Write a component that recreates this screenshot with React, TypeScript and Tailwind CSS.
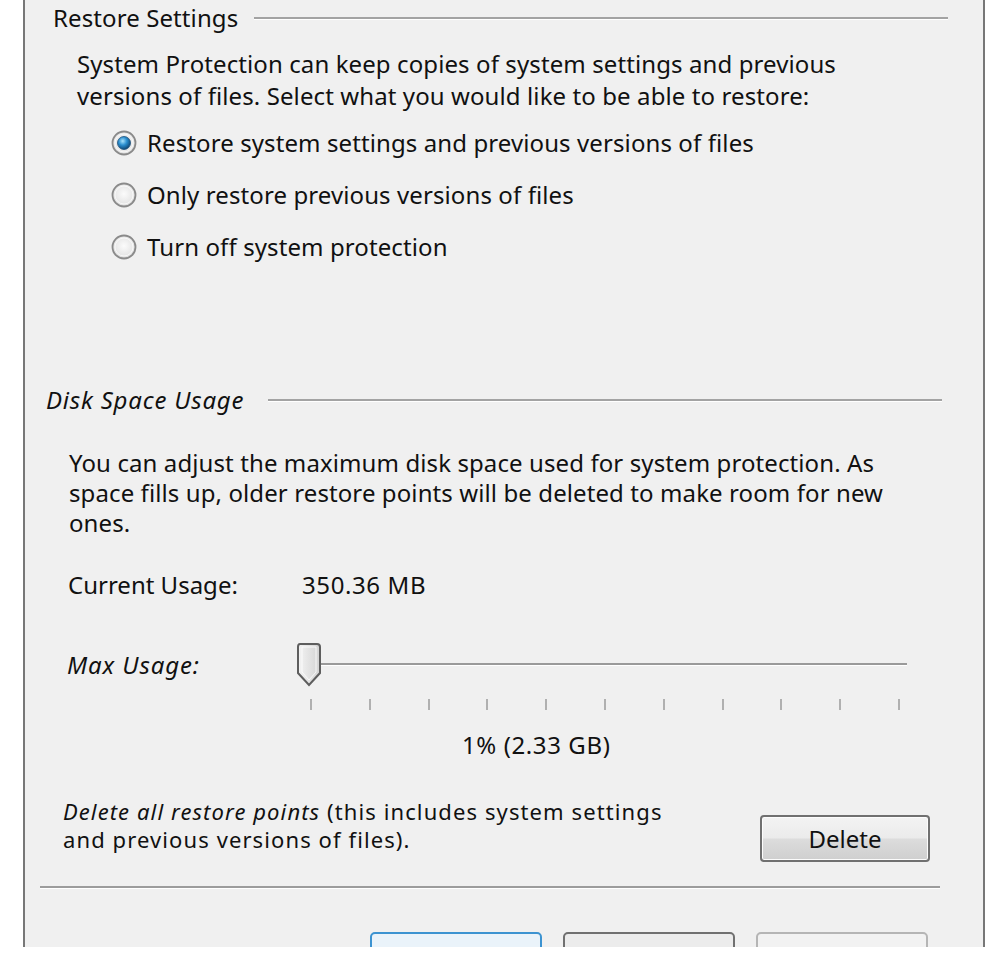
import React from "react";

const FONT = { fontFamily: '"Noto Sans", "Open Sans", Arial, sans-serif' };

function Radio({ checked, id }: { checked?: boolean; id: string }) {
  return (
    <svg width="26" height="26" viewBox="0 0 26 26" className="shrink-0">
      <defs>
        <radialGradient id={`bg-${id}`} cx="50%" cy="45%" r="60%">
          <stop offset="0%" stopColor="#fbfbfb" />
          <stop offset="70%" stopColor="#e6e6e6" />
          <stop offset="100%" stopColor="#d4d4d4" />
        </radialGradient>
        <radialGradient id={`dot-${id}`} cx="40%" cy="35%" r="70%">
          <stop offset="0%" stopColor="#a8e2fb" />
          <stop offset="45%" stopColor="#2b8fd0" />
          <stop offset="100%" stopColor="#0b3e69" />
        </radialGradient>
      </defs>
      <circle cx="13" cy="13" r="11.5" fill={`url(#bg-${id})`} stroke="#8a8a8a" strokeWidth="1.8" />
      <circle cx="13" cy="13" r="9" fill="none" stroke="#ffffff" strokeOpacity="0.7" strokeWidth="1" />
      {checked && (
        <circle cx="13" cy="13" r="6.5" fill={`url(#dot-${id})`} stroke="#1d4f78" strokeWidth="0.8" />
      )}
    </svg>
  );
}

function Thumb() {
  return (
    <svg width="28" height="46" viewBox="0 0 28 46">
      <defs>
        <linearGradient id="thumbg" x1="0" y1="0" x2="1" y2="0">
          <stop offset="0%" stopColor="#f4f4f4" />
          <stop offset="100%" stopColor="#d2d2d2" />
        </linearGradient>
      </defs>
      <path d="M5 2 H22 Q25 2 25 5 V31 L14 43 L3 31 V5 Q3 2 5 2 Z" fill="url(#thumbg)" stroke="#5e5e5e" strokeWidth="2" />
      <path d="M7 5 H21 V30 L14 38 L7 30 Z" fill="none" stroke="#ffffff" strokeOpacity="0.8" strokeWidth="1" />
    </svg>
  );
}

export default function App() {
  const ticks = Array.from({ length: 11 }, (_, i) => i);
  return (
    <div className="w-[1000px] h-[959px] bg-white overflow-hidden text-[#111111]" style={FONT}>
      <div className="ml-[23px] w-[962px] h-[947px] bg-[#f0f0f0] border-x-2 border-[#777777] overflow-hidden flex flex-col text-[24px]">
        {/* Restore Settings header */}
        <div className="flex items-center h-[36px] pl-[28px] pr-[35px] shrink-0">
          <span className="leading-none whitespace-nowrap tracking-[0.1px]">Restore Settings</span>
          <div className="flex-1 ml-[16px] h-[3px] border-t-2 border-[#a3a3a3] border-b border-b-white" />
        </div>

        <div className="mt-[12px] pl-[52px] leading-[32px] tracking-[0.1px]">
          <div className="whitespace-nowrap">System Protection can keep copies of system settings and previous</div>
          <div className="whitespace-nowrap">versions of files. Select what you would like to be able to restore:</div>
        </div>

        <div className="mt-[5px] pl-[86px] flex flex-col shrink-0">
          {[
            ["Restore system settings and previous versions of files", true],
            ["Only restore previous versions of files", false],
            ["Turn off system protection", false],
          ].map(([label, checked], i) => (
            <div key={i} className="h-[52px] flex items-center gap-[10px]">
              <Radio checked={checked as boolean} id={`r${i}`} />
              <span className="whitespace-nowrap tracking-[0.1px]">{label as string}</span>
            </div>
          ))}
        </div>

        {/* Disk Space Usage header */}
        <div className="mt-[109px] flex items-center h-[36px] pl-[21px] pr-[41px] shrink-0">
          <span className="leading-none italic whitespace-nowrap tracking-[0.8px]">Disk Space Usage</span>
          <div className="flex-1 ml-[24px] h-[3px] border-t-2 border-[#a3a3a3] border-b border-b-white" />
        </div>

        <div className="mt-[30px] pl-[44px] leading-[30px] tracking-[0.1px]">
          <div className="whitespace-nowrap">You can adjust the maximum disk space used for system protection. As</div>
          <div className="whitespace-nowrap">space fills up, older restore points will be deleted to make room for new</div>
          <div className="whitespace-nowrap">ones.</div>
        </div>

        <div className="mt-[32px] pl-[43px] h-[30px] flex items-center shrink-0">
          <span className="w-[234px] whitespace-nowrap">Current Usage:</span>
          <span className="whitespace-nowrap tracking-[0.6px]">350.36 MB</span>
        </div>

        <div className="mt-[41px] pl-[42px] h-[48px] flex items-center shrink-0">
          <span className="w-[228px] italic whitespace-nowrap tracking-[0.9px]">Max Usage:</span>
          <div className="relative w-[612px] h-[48px]">
            <div className="absolute left-[20px] right-0 top-[22px] h-[3px] border-t-2 border-[#9a9a9a] border-b border-b-white" />
            <div className="absolute left-0 top-[1px]">
              <Thumb />
            </div>
          </div>
        </div>

        <div className="mt-[10px] pl-[285px] pr-[83px] h-[11px] flex justify-between shrink-0">
          {ticks.map((t) => (
            <div key={t} className="w-[2px] h-[11px] bg-[#b0b0b0]" />
          ))}
        </div>

        <div className="mt-[20px] pl-[437px] h-[30px] flex items-center shrink-0">
          <span className="whitespace-nowrap tracking-[0.6px]">1% (2.33 GB)</span>
        </div>

        <div className="mt-[37px] pl-[38px] pr-[53px] flex items-start justify-between shrink-0">
          <div className="text-[22px] leading-[28px] tracking-[1.1px]">
            <div className="whitespace-nowrap">
              <span className="italic">Delete all restore points</span> (this includes system settings
            </div>
            <div className="whitespace-nowrap">and previous versions of files).</div>
          </div>
          <button className="mt-[18px] w-[170px] h-[47px] rounded-[4px] border-2 border-[#707070] bg-[linear-gradient(to_bottom,#f3f3f3_0%,#ebebeb_48%,#dcdcdc_52%,#cfcfcf_100%)] shadow-[inset_0_0_0_1px_#fcfcfc] flex items-center justify-center text-[24px] text-[#111111]">
            Delete
          </button>
        </div>

        <div className="mt-[24px] ml-[15px] mr-[43px] h-[3px] border-t-2 border-[#9c9c9c] border-b border-b-white shrink-0" />

        <div className="mt-[43px] pr-[55px] flex justify-end gap-[21px] shrink-0">
          <div className="w-[172px] h-[40px] rounded-[5px] border-2 border-[#3c93d1] bg-[#eaf3fa]" />
          <div className="w-[172px] h-[40px] rounded-[5px] border-2 border-[#707070] bg-[#ececec]" />
          <div className="w-[172px] h-[40px] rounded-[5px] border-2 border-[#b5b5b5] bg-[#f2f2f2]" />
        </div>
      </div>
    </div>
  );
}
